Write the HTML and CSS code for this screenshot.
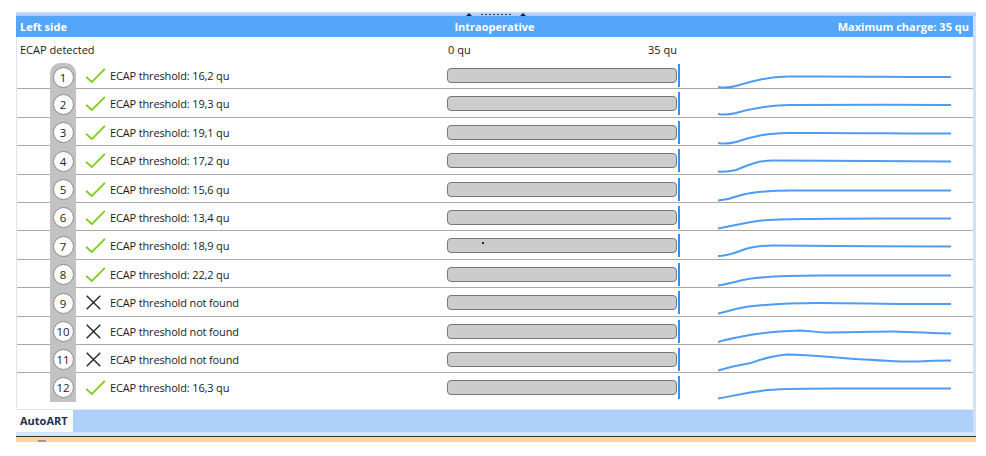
FILE: index.html
```html
<!DOCTYPE html>
<html lang="en">
<head>
    <meta charset="UTF-8">
    <meta name="viewport" content="width=device-width, initial-scale=1.0">
    <title>ECAP - Left side</title>
    <link rel="stylesheet" href="styles.css">
</head>
<body>
    <div class="panel">
        <div class="grip">
            <span class="tri"></span>
            <span class="dots"></span>
            <span class="tri"></span>
        </div>

        <div class="frame">
            <div class="main">
                <div class="header">
                    <span class="h-left">Left side</span>
                    <span class="h-mid">Intraoperative</span>
                    <span class="h-right">Maximum charge: 35 qu</span>
                </div>

                <div class="content">
                    <div class="scale">
                        <span class="detected">ECAP detected</span>
                        <span class="scale-min">0 qu</span>
                        <span class="scale-max">35 qu</span>
                    </div>

                    <div class="rows">
                        <div class="row first">
                            <div class="blank"></div>
                            <div class="num"><span class="circle">1</span></div>
                            <div class="icon"><svg class="check" viewBox="0 0 22 16"><path d="M1 9.5 L7 15 L21 1"/></svg></div>
                            <div class="label">ECAP threshold: 16,2 qu</div>
                            <div class="bar-cell"><div class="bar"></div></div>
                            <div class="marker"></div>
                            <div class="wave"><svg viewBox="0 0 234 28"><path d="M0 25 C6 26 10 26 18 24 C35 19 48 15 70 14.5 C120 14 180 15 233 15"/></svg></div>
                        </div>
                        <div class="row">
                            <div class="blank"></div>
                            <div class="num"><span class="circle">2</span></div>
                            <div class="icon"><svg class="check" viewBox="0 0 22 16"><path d="M1 9.5 L7 15 L21 1"/></svg></div>
                            <div class="label">ECAP threshold: 19,3 qu</div>
                            <div class="bar-cell"><div class="bar"></div></div>
                            <div class="marker"></div>
                            <div class="wave"><svg viewBox="0 0 234 28"><path d="M0 24 C6 25 10 25 18 23 C35 18 48 15.5 70 15 C120 14.5 180 15 233 15"/></svg></div>
                        </div>
                        <div class="row">
                            <div class="blank"></div>
                            <div class="num"><span class="circle">3</span></div>
                            <div class="icon"><svg class="check" viewBox="0 0 22 16"><path d="M1 9.5 L7 15 L21 1"/></svg></div>
                            <div class="label">ECAP threshold: 19,1 qu</div>
                            <div class="bar-cell"><div class="bar"></div></div>
                            <div class="marker"></div>
                            <div class="wave"><svg viewBox="0 0 234 28"><path d="M0 24 C6 25 10 25 18 23 C35 17 48 14.5 70 14 C120 13.5 180 14.5 233 14.5"/></svg></div>
                        </div>
                        <div class="row">
                            <div class="blank"></div>
                            <div class="num"><span class="circle">4</span></div>
                            <div class="icon"><svg class="check" viewBox="0 0 22 16"><path d="M1 9.5 L7 15 L21 1"/></svg></div>
                            <div class="label">ECAP threshold: 17,2 qu</div>
                            <div class="bar-cell"><div class="bar"></div></div>
                            <div class="marker"></div>
                            <div class="wave"><svg viewBox="0 0 234 28"><path d="M0 24.5 C6 25 10 25 18 23 C32 17 42 13.5 55 13.5 C100 13.5 180 14.5 233 14.5"/></svg></div>
                        </div>
                        <div class="row">
                            <div class="blank"></div>
                            <div class="num"><span class="circle">5</span></div>
                            <div class="icon"><svg class="check" viewBox="0 0 22 16"><path d="M1 9.5 L7 15 L21 1"/></svg></div>
                            <div class="label">ECAP threshold: 15,6 qu</div>
                            <div class="bar-cell"><div class="bar"></div></div>
                            <div class="marker"></div>
                            <div class="wave"><svg viewBox="0 0 234 28"><path d="M0 24.5 C8 24 12 23 20 20 C35 15.5 50 14.5 75 14.5 C120 14.5 180 14.5 233 14.5"/></svg></div>
                        </div>
                        <div class="row">
                            <div class="blank"></div>
                            <div class="num"><span class="circle">6</span></div>
                            <div class="icon"><svg class="check" viewBox="0 0 22 16"><path d="M1 9.5 L7 15 L21 1"/></svg></div>
                            <div class="label">ECAP threshold: 13,4 qu</div>
                            <div class="bar-cell"><div class="bar"></div></div>
                            <div class="marker"></div>
                            <div class="wave"><svg viewBox="0 0 234 28"><path d="M0 24.5 C15 22 30 17.5 50 16 C80 14 130 14.5 233 14.5"/></svg></div>
                        </div>
                        <div class="row">
                            <div class="blank"></div>
                            <div class="num"><span class="circle">7</span></div>
                            <div class="icon"><svg class="check" viewBox="0 0 22 16"><path d="M1 9.5 L7 15 L21 1"/></svg></div>
                            <div class="label">ECAP threshold: 18,9 qu</div>
                            <div class="bar-cell"><div class="bar"><span class="speck"></span></div></div>
                            <div class="marker"></div>
                            <div class="wave"><svg viewBox="0 0 234 28"><path d="M0 24 C8 24 14 22 22 19 C32 15 40 13.5 55 13.5 C100 14 180 14.5 233 14.5"/></svg></div>
                        </div>
                        <div class="row">
                            <div class="blank"></div>
                            <div class="num"><span class="circle">8</span></div>
                            <div class="icon"><svg class="check" viewBox="0 0 22 16"><path d="M1 9.5 L7 15 L21 1"/></svg></div>
                            <div class="label">ECAP threshold: 22,2 qu</div>
                            <div class="bar-cell"><div class="bar"></div></div>
                            <div class="marker"></div>
                            <div class="wave"><svg viewBox="0 0 234 28"><path d="M0 24.5 C10 23 20 20 30 18 C50 15 70 14.5 100 14.5 C150 14.5 190 14.5 233 14.5"/></svg></div>
                        </div>
                        <div class="row">
                            <div class="blank"></div>
                            <div class="num"><span class="circle">9</span></div>
                            <div class="icon"><svg class="cross" viewBox="0 0 20 20"><path d="M2 2 L18 18 M18 2 L2 18"/></svg></div>
                            <div class="label">ECAP threshold not found</div>
                            <div class="bar-cell"><div class="bar"></div></div>
                            <div class="marker"></div>
                            <div class="wave"><svg viewBox="0 0 234 28"><path d="M0 24.5 C12 22 22 18 35 17 C55 15 70 14 100 14 C140 14 160 15 190 15 C210 15 220 15 233 15"/></svg></div>
                        </div>
                        <div class="row">
                            <div class="blank"></div>
                            <div class="num"><span class="circle">10</span></div>
                            <div class="icon"><svg class="cross" viewBox="0 0 20 20"><path d="M2 2 L18 18 M18 2 L2 18"/></svg></div>
                            <div class="label">ECAP threshold not found</div>
                            <div class="bar-cell"><div class="bar"></div></div>
                            <div class="marker"></div>
                            <div class="wave"><svg viewBox="0 0 234 28"><path d="M0 24 C10 21 22 19 35 16.5 C50 14 65 13 82 12.5 C95 13 100 14.5 110 14.5 C140 14.5 160 13.5 175 13.5 C200 14 215 15.5 233 15.5"/></svg></div>
                        </div>
                        <div class="row">
                            <div class="blank"></div>
                            <div class="num"><span class="circle">11</span></div>
                            <div class="icon"><svg class="cross" viewBox="0 0 20 20"><path d="M2 2 L18 18 M18 2 L2 18"/></svg></div>
                            <div class="label">ECAP threshold not found</div>
                            <div class="bar-cell"><div class="bar"></div></div>
                            <div class="marker"></div>
                            <div class="wave"><svg viewBox="0 0 234 28"><path d="M0 24.5 C12 21 22 19 33 17 C45 13 55 9 70 8.5 C90 8.5 110 11 130 12.5 C160 14.5 185 16 200 15.5 C215 14.5 225 14.5 233 14.5"/></svg></div>
                        </div>
                        <div class="row last">
                            <div class="blank"></div>
                            <div class="num"><span class="circle">12</span></div>
                            <div class="icon"><svg class="check" viewBox="0 0 22 16"><path d="M1 9.5 L7 15 L21 1"/></svg></div>
                            <div class="label">ECAP threshold: 16,3 qu</div>
                            <div class="bar-cell"><div class="bar"></div></div>
                            <div class="marker"></div>
                            <div class="wave"><svg viewBox="0 0 234 28"><path d="M0 24.5 C15 22 30 18 50 16 C70 14.5 90 14.5 120 14.5 C160 14.5 200 14.5 233 14.5"/></svg></div>
                        </div>
                    </div>
                </div>

                <div class="tabs">
                    <span class="tab">AutoART</span>
                </div>
            </div>
            <div class="side"></div>
        </div>

        <div class="bottom-strip">
            <span class="knob"></span>
        </div>
    </div>
</body>
</html>
```

FILE: styles.css
```css
body {
    margin: 0;
    background: #ffffff;
    font-family: 'Open Sans', 'Noto Sans', sans-serif;
    font-size: 11px;
    color: #1a1a1a;
}
.panel {
    margin: 12px 0 0 16px;
    width: 960px;
}
.grip {
    height: 4px;
    background: linear-gradient(#c6dcf8, #a9cbf5);
    display: flex;
    align-items: center;
    justify-content: center;
    gap: 9px;
}
.tri {
    width: 0;
    height: 0;
    border-left: 3px solid transparent;
    border-right: 3px solid transparent;
    border-bottom: 3px solid #222;
}
.dots {
    width: 30px;
    height: 1px;
    background: repeating-linear-gradient(90deg, #333 0 2px, transparent 2px 4px);
}
.frame {
    display: flex;
}
.main {
    width: 957px;
}
.side {
    width: 3px;
    background: #cfe2fa;
}
.header {
    height: 21px;
    background: #55a5fb;
    color: #ffffff;
    font-weight: bold;
    font-size: 11px;
    display: grid;
    grid-template-columns: 1fr auto 1fr;
    align-items: center;
    padding: 0 4px;
}
.h-right {
    text-align: right;
}
.content {
    background: #ffffff;
    border-left: 1px solid #d8e4f2;
    padding-bottom: 6px;
}
.scale {
    height: 24px;
    display: grid;
    grid-template-columns: 428px 231px;
    align-items: center;
    position: relative;
    padding-left: 3px;
}
.scale-max {
    position: absolute;
    left: 631px;
}
.rows {
    display: flex;
    flex-direction: column;
}
.row {
    height: 28.4px;
    box-sizing: border-box;
    border-bottom: 1px solid #a9a9a9;
    display: grid;
    grid-template-columns: 33px 26px 34px 337px 231px 2px 1fr;
    align-items: center;
}
.row.last {
    border-bottom: none;
}
.num {
    align-self: stretch;
    margin-bottom: -1px;
    background: #c2c2c2;
    display: flex;
    align-items: center;
    justify-content: center;
}
.row.first .num {
    margin-top: 2px;
    border-radius: 10px 10px 0 0;
}
.row.last .num {
    margin-bottom: 0;
}
.circle {
    width: 19px;
    height: 19px;
    border-radius: 50%;
    background: #ffffff;
    border: 1px solid #8a8a8a;
    display: flex;
    align-items: center;
    justify-content: center;
    font-size: 11.5px;
    color: #222;
}
.icon {
    padding-left: 9px;
    display: flex;
    align-items: center;
}
.check {
    width: 21px;
    height: 15px;
    fill: none;
    stroke: #7fcc1a;
    stroke-width: 2;
}
.cross {
    width: 17px;
    height: 17px;
    fill: none;
    stroke: #222;
    stroke-width: 1.6;
}
.label {
    white-space: nowrap;
    letter-spacing: -0.15px;
}
.bar {
    height: 13px;
    margin-right: 1px;
    background: #cccccc;
    border: 1.5px solid #777777;
    border-radius: 4px;
    position: relative;
}
.speck {
    position: absolute;
    left: 34px;
    top: 3px;
    width: 2px;
    height: 2px;
    background: #222;
}
.marker {
    align-self: stretch;
    margin: 3px 0;
    background: #3b8ef0;
}
.wave {
    padding-left: 38px;
    align-self: stretch;
    display: flex;
}
.wave svg {
    width: 234px;
    height: 28px;
    margin-top: 1px;
}
.wave path {
    fill: none;
    stroke: #4d9cf2;
    stroke-width: 2;
}
.tabs {
    margin-top: 1px;
    height: 22px;
    background: #aed0fb;
    border-top: 1px solid #dbe8f8;
    display: flex;
}
.tab {
    background: #ffffff;
    padding: 0 6px 0 4px;
    width: 47px;
    display: flex;
    align-items: center;
    font-weight: bold;
    color: #1b2e5c;
}
.bottom-strip {
    border-top: 4px solid #d3e6fc;
    height: 6px;
    background: #fcd3a4;
    box-shadow: inset 0 1px 0 #333;
    position: relative;
}
.knob {
    position: absolute;
    left: 22px;
    top: 4px;
    width: 8px;
    height: 2px;
    background: #999;
}
```
